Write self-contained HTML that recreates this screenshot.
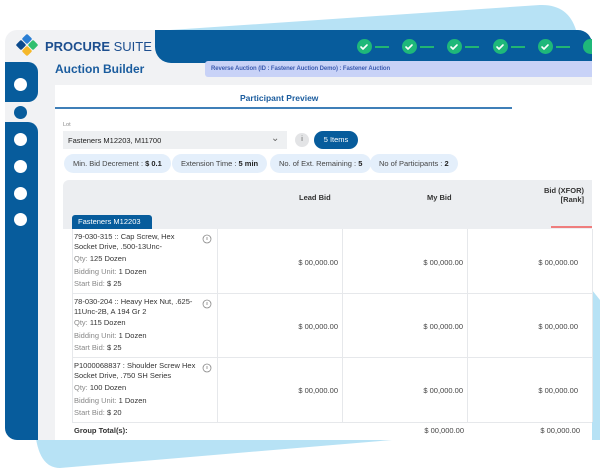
<!DOCTYPE html>
<html><head><meta charset="utf-8"><style>
*{margin:0;padding:0;box-sizing:border-box}
body{width:605px;height:472px;background:#fff;position:relative;overflow:hidden;font-family:"Liberation Sans",sans-serif;color:#333}
.a{position:absolute}
.card{left:5px;top:30px;width:587px;height:410px;background:#f1f2f4;border-radius:12px 14px 0 12px;overflow:hidden}
.hdr{left:155px;top:30px;width:437px;height:33px;background:#075c9c;border-radius:0 14px 0 16px}
.chk{width:15px;height:15px;border-radius:50%;background:#1fb87a;top:39px}
.dash{height:2px;width:14px;background:#21b573;top:46px}
.side{left:5px;width:33px;background:#075c9c}
.dot{width:13px;height:13px;border-radius:50%;background:#fff;left:14px}
.panel{left:55px;top:85px;width:537px;height:355px;background:#fff}
.chip{top:154px;height:19px;border-radius:10px;background:#e4effb;font-size:7.5px;line-height:19px;padding:0 9px;color:#444;white-space:nowrap}
.chip b{color:#222}
.t{font-size:7.5px;white-space:nowrap}
.g{color:#888}
.ti{font-size:7.5px;line-height:10px;color:#333;white-space:nowrap}
.meta{font-size:7.5px;line-height:12.7px;white-space:nowrap;color:#333}
.amt{font-size:7.5px;color:#444;text-align:right;width:100px}
.vl{width:1px;background:#e6e8eb}
.hl{height:1px;background:#e6e8eb}
</style></head><body>
<svg class="a" style="left:0;top:0" width="605" height="472">
<path d="M170 30 L540 5 Q568 4 576 30 Z" fill="#b7e2f5"/>
<path d="M592 290 L600 300 L600 440 L592 440Z" fill="#b7e2f5"/>
<path d="M35 430 Q38 468 60 468 L392 440 Z" fill="#b7e2f5"/>
</svg>
<div class="a card"></div>
<div class="a hdr"></div>
<div class="a" style="left:205px;top:61px;width:387px;height:16px;background:#c8d2f7;border-radius:3px 0 0 3px"></div>
<div class="a t" style="left:211px;top:66px;font-size:6px;color:#3d5cb0;font-weight:bold;letter-spacing:-0.1px">Reverse Auction (ID : Fastener Auction Demo) : Fastener Auction</div>
<!-- checks -->
<div class="a chk" style="left:357px"></div><div class="a dash" style="left:375px"></div>
<div class="a chk" style="left:402px"></div><div class="a dash" style="left:420px"></div>
<div class="a chk" style="left:447px"></div><div class="a dash" style="left:465px"></div>
<div class="a chk" style="left:493px"></div><div class="a dash" style="left:511px"></div>
<div class="a chk" style="left:538px"></div><div class="a dash" style="left:556px"></div>
<div class="a chk" style="left:583px;width:9px;border-radius:8px 0 0 8px"></div>
<svg class="a" style="left:355px;top:37px" width="240" height="20">
<g fill="none" stroke="#fff" stroke-width="1.6" stroke-linecap="round" stroke-linejoin="round">
<path d="M6 10l2 2 4-4"/><path d="M51 10l2 2 4-4"/><path d="M96 10l2 2 4-4"/><path d="M142 10l2 2 4-4"/><path d="M187 10l2 2 4-4"/>
</g></svg>
<!-- logo -->
<svg class="a" style="left:15px;top:33px" width="24" height="24" viewBox="0 0 24 24">
<g transform="rotate(45 12 12)">
<rect x="4" y="4" width="7.5" height="7.5" rx="1.5" fill="#2a7fd4"/>
<rect x="12.5" y="4" width="7.5" height="7.5" rx="1.5" fill="#2fbf6e"/>
<rect x="12.5" y="12.5" width="7.5" height="7.5" rx="1.5" fill="#f5b82a"/>
<rect x="4" y="12.5" width="7.5" height="7.5" rx="1.5" fill="#0b4a8c"/>
</g></svg>
<div class="a t" style="left:45px;top:39px;font-size:13px;color:#1d4f8f"><b>PROCURE</b> SUITE</div>
<div class="a t" style="left:55px;top:62px;font-size:12px;color:#1a5c9e;font-weight:bold">Auction Builder</div>
<!-- sidebar -->
<div class="a side" style="top:62px;height:40px;border-radius:0 10px 10px 0"></div>
<div class="a side" style="top:122px;height:318px;border-radius:0 10px 0 12px"></div>
<div class="a dot" style="top:78px"></div>
<div class="a" style="top:106px;left:14px;width:13px;height:13px;border-radius:50%;background:#075c9c"></div>
<div class="a dot" style="top:133px"></div>
<div class="a dot" style="top:160px"></div>
<div class="a dot" style="top:187px"></div>
<div class="a dot" style="top:213px"></div>
<!-- panel -->
<div class="a panel"></div>
<div class="a t" style="left:240px;top:93px;font-size:8.5px;font-weight:bold;color:#1a5c9e">Participant Preview</div>
<div class="a" style="left:55px;top:107px;width:457px;height:1.5px;background:#3f7fb8"></div>
<div class="a t g" style="left:63px;top:122px;font-size:5.5px">Lot</div>
<div class="a" style="left:63px;top:131px;width:224px;height:18px;background:#eef0f2"></div>
<div class="a t" style="left:68px;top:136px;color:#222">Fasteners M12203, M11700</div>
<div class="a t" style="left:271px;top:133px;font-size:10px;color:#666">&#8964;</div>
<div class="a" style="left:295px;top:133px;width:14px;height:14px;border-radius:50%;background:#e3e4e6;font-size:7px;text-align:center;line-height:14px;color:#555">i</div>
<div class="a" style="left:314px;top:131px;width:44px;height:18px;border-radius:9px;background:#075c9c;color:#fff;font-size:7.5px;text-align:center;line-height:18px">5 Items</div>
<div class="a chip" style="left:64px">Min. Bid Decrement : <b>$ 0.1</b></div>
<div class="a chip" style="left:172px">Extension Time : <b>5 min</b></div>
<div class="a chip" style="left:270px">No. of Ext. Remaining : <b>5</b></div>
<div class="a chip" style="left:370px">No of Participants : <b>2</b></div>
<!-- table -->
<div class="a" style="left:63px;top:180px;width:529px;height:49px;background:#eceef1;border-radius:6px 0 0 0"></div>
<div class="a t" style="left:299px;top:193px;font-weight:bold;color:#333">Lead Bid</div>
<div class="a t" style="left:427px;top:193px;font-weight:bold;color:#333">My Bid</div>
<div class="a t" style="left:537px;top:186px;font-weight:bold;color:#333;text-align:right;width:47px">Bid (XFOR)<br>[Rank]</div>
<div class="a" style="left:551px;top:226px;width:41px;height:1.5px;background:#ef7d7d"></div>
<div class="a" style="left:72px;top:215px;width:80px;height:14px;background:#075c9c;border-radius:3px 3px 0 0;color:#fff;font-size:7.5px;line-height:14px;padding-left:6px">Fasteners M12203</div>
<div class="a" style="left:63px;top:229px;width:529px;height:193px;background:#fff"></div>
<div class="a vl" style="left:72px;top:229px;height:193px"></div>
<div class="a vl" style="left:217px;top:229px;height:193px"></div>
<div class="a vl" style="left:342px;top:229px;height:193px"></div>
<div class="a vl" style="left:467px;top:229px;height:193px"></div>
<div class="a vl" style="left:592px;top:229px;height:193px"></div>
<div class="a hl" style="left:72px;top:293px;width:520px"></div>
<div class="a hl" style="left:72px;top:357px;width:520px"></div>
<div class="a hl" style="left:72px;top:422px;width:520px"></div>
<!-- row1 -->
<div class="a ti" style="left:74px;top:232px">79-030-315 :: Cap Screw, Hex<br>Socket Drive, .500-13Unc-</div>
<div class="a meta" style="left:74px;top:253px"><span class="g">Qty:</span> 125 Dozen<br><span class="g">Bidding Unit:</span> 1 Dozen<br><span class="g">Start Bid:</span> $ 25</div>
<div class="a amt" style="left:238px;top:258px">$ 00,000.00</div>
<div class="a amt" style="left:363px;top:258px">$ 00,000.00</div>
<div class="a amt" style="left:478px;top:258px">$ 00,000.00</div>
<!-- row2 -->
<div class="a ti" style="left:74px;top:297px">78-030-204 :: Heavy Hex Nut, .625-<br>11Unc-2B, A 194 Gr 2</div>
<div class="a meta" style="left:74px;top:317px"><span class="g">Qty:</span> 115 Dozen<br><span class="g">Bidding Unit:</span> 1 Dozen<br><span class="g">Start Bid:</span> $ 25</div>
<div class="a amt" style="left:238px;top:322px">$ 00,000.00</div>
<div class="a amt" style="left:363px;top:322px">$ 00,000.00</div>
<div class="a amt" style="left:478px;top:322px">$ 00,000.00</div>
<!-- row3 -->
<div class="a ti" style="left:74px;top:361px">P1000068837 : Shoulder Screw Hex<br>Socket Drive, .750 SH Series</div>
<div class="a meta" style="left:74px;top:382px"><span class="g">Qty:</span> 100 Dozen<br><span class="g">Bidding Unit:</span> 1 Dozen<br><span class="g">Start Bid:</span> $ 20</div>
<div class="a amt" style="left:238px;top:386px">$ 00,000.00</div>
<div class="a amt" style="left:363px;top:386px">$ 00,000.00</div>
<div class="a amt" style="left:478px;top:386px">$ 00,000.00</div>
<svg class="a" style="left:202px;top:234px" width="10" height="140"><g fill="none" stroke="#888" stroke-width=".8"><circle cx="5" cy="5" r="4"/><circle cx="5" cy="70" r="4"/><circle cx="5" cy="134" r="4"/></g><g stroke="#888" stroke-width=".8"><path d="M5 3v3M5 68v3M5 132v3"/></g></svg>
<div class="a t" style="left:74px;top:426px;font-weight:bold;color:#333">Group Total(s):</div>
<div class="a amt" style="left:364px;top:426px">$ 00,000.00</div>
<div class="a amt" style="left:480px;top:426px">$ 00,000.00</div>
</body></html>
